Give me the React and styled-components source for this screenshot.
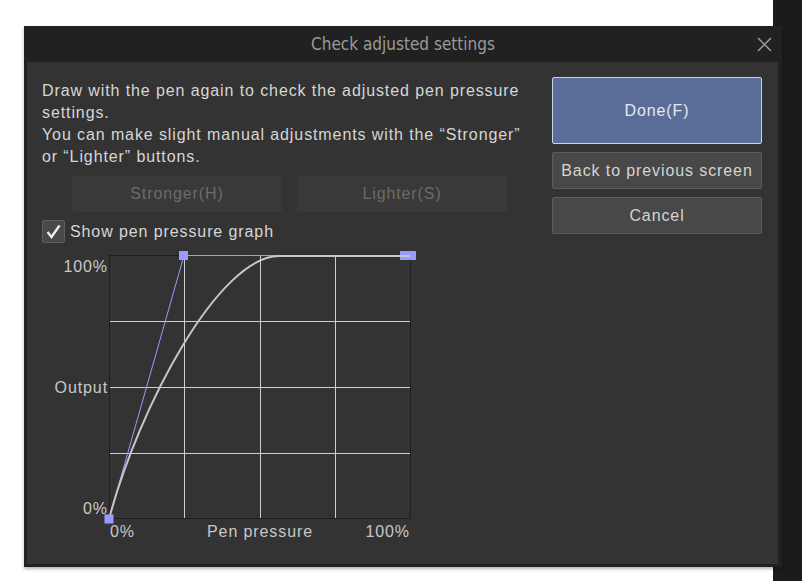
import React from "react";
import styled, { createGlobalStyle } from "styled-components";

const GlobalStyle = createGlobalStyle`
  html, body {
    margin: 0;
    padding: 0;
    background: #ffffff;
  }
  body {
    font-family: "Liberation Sans", Arial, sans-serif;
    letter-spacing: 0.9px;
  }
`;

const Desktop = styled.div`
  position: relative;
  width: 802px;
  height: 581px;
  overflow: hidden;
  display: flex;
`;

const Canvas = styled.div`
  flex: 1;
  background: #ffffff;
`;

const SideStrip = styled.div`
  width: 29px;
  background: #1b1b1b;
`;

const Dialog = styled.div`
  position: absolute;
  left: 24px;
  top: 26px;
  width: 758px;
  height: 541px;
  background: #212121;
  display: flex;
  flex-direction: column;
  box-shadow: 0 2px 3px rgba(0, 0, 0, 0.3);
`;

const TitleBar = styled.div`
  position: relative;
  height: 36px;
  flex-shrink: 0;
  display: flex;
  align-items: center;
  justify-content: center;
`;

const Title = styled.span`
  font-family: "DejaVu Sans Condensed", "Liberation Sans Narrow", sans-serif;
  font-size: 17px;
  letter-spacing: 0;
  color: #9a9a9a;
`;

const CloseButton = styled.div`
  position: absolute;
  right: 10px;
  top: 11px;
  width: 15px;
  height: 15px;
`;

const Body = styled.div`
  flex: 1;
  margin: 0 4px 3px 3px;
  background: #333333;
  display: flex;
  gap: 20px;
  padding: 15px 16px 0 15px;
`;

const LeftColumn = styled.div`
  width: 490px;
  padding-top: 3px;
  display: flex;
  flex-direction: column;
`;

const Description = styled.p`
  margin: 0;
  font-size: 16px;
  line-height: 22px;
  color: #d6d6d6;
`;

const AdjustRow = styled.div`
  display: flex;
  gap: 15px;
  margin-top: 8px;
  padding-left: 30px;
`;

const AdjustButton = styled.div`
  width: 210px;
  height: 36px;
  border-radius: 2px;
  background: #393939;
  color: #6b6b6b;
  font-size: 16px;
  display: flex;
  align-items: center;
  justify-content: center;
`;

const CheckRow = styled.label`
  display: flex;
  align-items: center;
  gap: 5px;
  margin-top: 8px;
  font-size: 16px;
  color: #d6d6d6;
`;

const CheckBox = styled.span`
  width: 21px;
  height: 21px;
  border: 1px solid #5e5e5e;
  border-radius: 2px;
  background: #484848;
  display: flex;
  align-items: center;
  justify-content: center;
`;

const Graph = styled.div`
  display: grid;
  grid-template-columns: 67px 302px;
  grid-template-rows: 264px auto;
  margin-top: 12px;
  font-size: 16px;
  line-height: 18px;
  color: #c8c8c8;
`;

const YAxis = styled.div`
  display: flex;
  flex-direction: column;
  justify-content: space-between;
  align-items: flex-end;
  padding: 3px 1px 1px 0;
`;

const Plot = styled.svg`
  display: block;
  overflow: visible;
`;

const XAxis = styled.div`
  grid-column: 2;
  display: grid;
  grid-template-columns: 1fr auto 1fr;
  margin-top: 4px;
`;

const XLabel = styled.span`
  justify-self: ${(p) => p.$align || "center"};
  padding: 0 1px;
`;

const RightColumn = styled.div`
  width: 210px;
  display: flex;
  flex-direction: column;
  gap: 8px;
`;

const ActionButton = styled.div`
  box-sizing: border-box;
  height: ${(p) => (p.$primary ? "67px" : "37px")};
  border-radius: 2px;
  border: 1px solid ${(p) => (p.$primary ? "#c9d2e4" : "#5c5c5c")};
  background: ${(p) => (p.$primary ? "#5a6d98" : "#484848")};
  color: ${(p) => (p.$primary ? "#e4e9f2" : "#d4d4d4")};
  font-size: 16px;
  display: flex;
  align-items: center;
  justify-content: center;
`;

const gridX = [75.5, 151.5, 226.5];
const gridY = [66.5, 132.5, 198.5];

const PressureGraph = () => (
  <Graph>
    <YAxis>
      <span>100%</span>
      <span>Output</span>
      <span>0%</span>
    </YAxis>
    <Plot width="302" height="264" viewBox="0 0 302 264">
      <rect x="0.5" y="0.5" width="301" height="263" fill="#333333" stroke="#1f1f1f" />
      {gridX.map((x) => (
        <line key={x} x1={x} y1="1" x2={x} y2="263" stroke="#cfcfcf" strokeWidth="1" />
      ))}
      {gridY.map((y) => (
        <line key={y} x1="1" y1={y} x2="301" y2={y} stroke="#cfcfcf" strokeWidth="1" />
      ))}
      <polyline points="0,264 75,0.5 301,0.5" fill="none" stroke="#9b9bff" strokeWidth="1" />
      <rect x="291" y="-4" width="16" height="9" fill="#9b9bff" />
      <path d="M0 264 C30 152 110 1 170 1 L301 1" fill="none" stroke="#c6c6c6" strokeWidth="2" />
      <rect x="70" y="-4" width="9" height="9" fill="#9b9bff" />
      <rect x="-4.5" y="259.5" width="9" height="9" fill="#9b9bff" />
    </Plot>
    <XAxis>
      <XLabel $align="start">0%</XLabel>
      <XLabel>Pen pressure</XLabel>
      <XLabel $align="end">100%</XLabel>
    </XAxis>
  </Graph>
);

const App = () => {
  return (
    <>
      <GlobalStyle />
      <Desktop>
        <Canvas />
        <SideStrip />
        <Dialog>
          <TitleBar>
            <Title>Check adjusted settings</Title>
            <CloseButton>
              <svg width="15" height="15" viewBox="0 0 15 15">
                <path d="M1 1 L14 14 M14 1 L1 14" stroke="#9c9c9c" strokeWidth="1.5" />
              </svg>
            </CloseButton>
          </TitleBar>
          <Body>
            <LeftColumn>
              <Description>
                Draw with the pen again to check the adjusted pen pressure settings.
                <br />
                You can make slight manual adjustments with the “Stronger” or “Lighter” buttons.
              </Description>
              <AdjustRow>
                <AdjustButton>Stronger(H)</AdjustButton>
                <AdjustButton>Lighter(S)</AdjustButton>
              </AdjustRow>
              <CheckRow>
                <CheckBox>
                  <svg width="17" height="17" viewBox="0 0 17 17">
                    <path d="M2.5 9 L6.5 14 L14.5 2.5" fill="none" stroke="#ececec" strokeWidth="2.4" />
                  </svg>
                </CheckBox>
                Show pen pressure graph
              </CheckRow>
              <PressureGraph />
            </LeftColumn>
            <RightColumn>
              <ActionButton $primary>Done(F)</ActionButton>
              <ActionButton>Back to previous screen</ActionButton>
              <ActionButton>Cancel</ActionButton>
            </RightColumn>
          </Body>
        </Dialog>
      </Desktop>
    </>
  );
};

export default App;
